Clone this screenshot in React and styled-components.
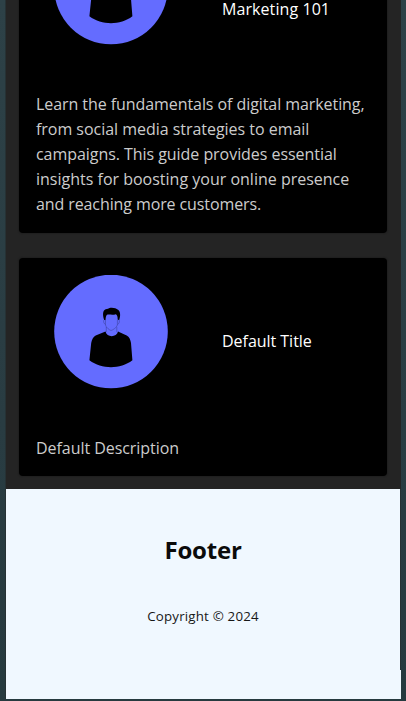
import React from 'react';
import styled, { createGlobalStyle } from 'styled-components';

const GlobalStyle = createGlobalStyle`
  *, *::before, *::after { box-sizing: border-box; }
  body {
    margin: 0;
    background: #2a3c42;
    font-family: 'Segoe UI', 'Open Sans', 'Noto Sans', sans-serif;
  }
`;

const Viewport = styled.div`
  height: 701px;
  padding: 0 5px 2px;
  overflow: hidden;
  background: linear-gradient(#2d4147, #293c42 60%, #263a3f);
`;

const Page = styled.div`
  display: flex;
  flex-direction: column;
  height: 699px;
  width: 396px;
  border-left: 1px solid #263235;
  overflow: hidden;
`;

const Content = styled.main`
  display: flex;
  flex-direction: column;
  justify-content: flex-end;
  gap: 25px;
  flex: none;
  height: 489px;
  padding: 0 14px 13px 13px;
  background: #242424;
`;

const Card = styled.article`
  flex: none;
  height: ${(p) => p.$height}px;
  padding: 17px;
  border-radius: 4px;
  background: #000;
  box-shadow: 0 0 2px #141414;
`;

const CardHeader = styled.header`
  display: grid;
  grid-template-columns: 186px 1fr;
  align-items: center;
  height: 132px;
`;

const Avatar = styled.svg`
  display: block;
  align-self: start;
  margin-left: 18px;
  width: 114px;
  height: 114px;
`;

const Title = styled.h3`
  margin: 0;
  padding-top: ${(p) => p.$offset}px;
  color: #fff;
  font-size: 16px;
  font-weight: 400;
  line-height: 25px;
  letter-spacing: ${(p) => p.$tracking}px;
`;

const Description = styled.p`
  margin: 29px 0 0;
  color: #ccc;
  font-size: 16px;
  line-height: 25px;
  white-space: nowrap;
`;

const Line = styled.span`
  display: block;
  letter-spacing: ${(p) => p.$tracking}px;
`;

const Footer = styled.footer`
  display: flex;
  flex: 1;
  background: linear-gradient(#263235, #263235) right top / 1px 181px no-repeat #f0f8ff;
`;

const FooterBody = styled.div`
  width: 394px;
  padding-top: 43px;
  text-align: center;
`;

const FooterTitle = styled.h2`
  margin: 0;
  color: #0b0b0b;
  font-size: 24px;
  font-weight: 700;
  line-height: 36px;
  letter-spacing: -0.2px;
`;

const Copyright = styled.p`
  margin: 38px 0 0;
  color: #171717;
  font-size: 13.3px;
  line-height: 20px;
  letter-spacing: 0.2px;
`;

function Person() {
  return (
    <Avatar viewBox="0 0 114 114" aria-hidden="true">
      <circle cx="57" cy="56.5" r="56.8" fill="#646cff" />
      <path
        d="M51.5 56.6C52.6 62.8 62.8 62.8 64 56.6L72.7 60.5C75.3 61.9 76.5 64.8 77 68L78.4 85.2C66 94.5 48 94.5 35.4 85.2L37.2 68C37.7 64.8 39.2 61.9 41.7 60.5Z"
        fill="#000"
      />
      <path
        d="M50.2 45C48.8 41 48.5 37 50.5 35C52 33.8 53.8 34.5 55 33.3C58 32.1 62 33.2 64 34.8C66.7 36.5 66.6 41 65.2 45L63.7 44.7C63.7 42 63.3 40 61.8 39.2C59 40.2 55 39.2 53 39.8C51.8 41 51.7 43 51.5 44.9Z"
        fill="#000"
      />
      <path
        d="M51.5 45V50C52 52.7 55.5 55 57 55.5C59 55 62.7 52.5 63.4 50V45M50 45C49 46 50 49 51.4 49.5M65 45C66 46 65 49 63.6 49.5M52.3 52V57M62.8 52V57"
        fill="none"
        stroke="#2b2f78"
        strokeWidth="0.4"
      />
    </Avatar>
  );
}

const courses = [
  {
    title: 'Marketing 101',
    titleTracking: 0.08,
    titleOffset: 25,
    height: 319,
    lines: [
      ['Learn the fundamentals of digital marketing,', -0.07],
      ['from social media strategies to email', -0.03],
      ['campaigns. This guide provides essential', -0.05],
      ['insights for boosting your online presence', 0],
      ['and reaching more customers.', -0.1],
    ],
  },
  {
    title: 'Default Title',
    titleTracking: -0.03,
    titleOffset: 0,
    height: 218,
    lines: [['Default Description', -0.05]],
  },
];

export default function App() {
  return (
    <Viewport>
      <GlobalStyle />
      <Page>
        <Content>
          {courses.map((c) => (
            <Card key={c.title} $height={c.height}>
              <CardHeader>
                <Person />
                <Title $tracking={c.titleTracking} $offset={c.titleOffset}>{c.title}</Title>
              </CardHeader>
              <Description>
                {c.lines.map(([text, tracking]) => (
                  <Line key={text} $tracking={tracking}>{text}</Line>
                ))}
              </Description>
            </Card>
          ))}
        </Content>
        <Footer>
          <FooterBody>
            <FooterTitle>Footer</FooterTitle>
            <Copyright>Copyright © 2024</Copyright>
          </FooterBody>
        </Footer>
      </Page>
    </Viewport>
  );
}
